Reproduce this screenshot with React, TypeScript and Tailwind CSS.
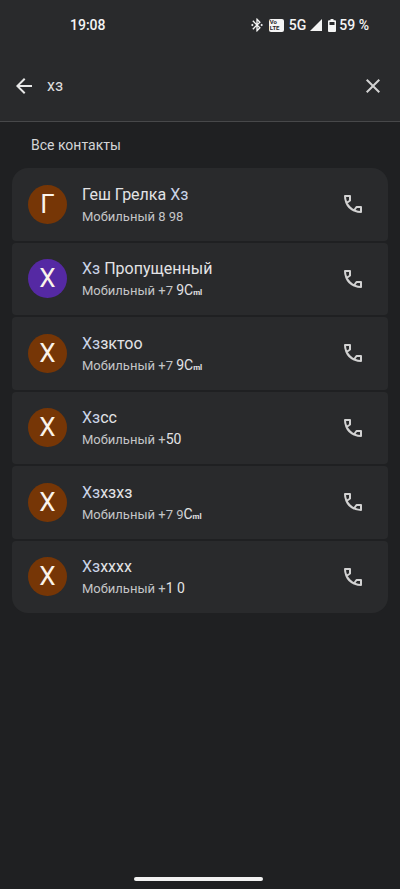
import { MdArrowBack, MdBluetoothConnected, MdClose } from "react-icons/md";

interface Contact {
  initial: string;
  color: string;
  before?: string;
  match: string;
  after?: string;
  phone: string;
  tail?: string;
  small?: string;
}

const contacts: Contact[] = [
  { initial: "Г", color: "bg-[#763606]", before: "Геш Грелка ", match: "Хз", phone: "8 98" },
  { initial: "Х", color: "bg-[#5529a3]", match: "Хз", after: " Пропущенный", phone: "+7 ", tail: "9C", small: "ml" },
  { initial: "Х", color: "bg-[#763606]", match: "Хз", after: "зктоо", phone: "+7 ", tail: "9C", small: "ml" },
  { initial: "Х", color: "bg-[#763606]", match: "Хз", after: "сс", phone: "+", tail: "50" },
  { initial: "Х", color: "bg-[#763606]", match: "Хз", after: "хзхз", phone: "+7 9", tail: "C", small: "ml" },
  { initial: "Х", color: "bg-[#763606]", match: "Хз", after: "хххх", phone: "+", tail: "1 0" },
];

const PhoneIcon = () => (
  <svg viewBox="0 0 24 24" className="size-6" fill="none" stroke="currentColor" strokeWidth="2" strokeLinejoin="round">
    <path d="M4 4h5v4.500L5.500 11C7 14.500 9.500 17 13 18.500l2.500-3.500H20v5C11.200 20 4 12.800 4 4z" />
  </svg>
);

const StatusBar = () => (
  <div className="flex h-[50px] items-center justify-between pl-[70px] pr-[31px] text-sm font-medium text-[#f4f4f4]">
    <span>19:08</span>
    <div className="flex items-center">
      <MdBluetoothConnected className="mr-1 size-4" stroke="currentColor" />
      <div className="mr-[5px] flex h-[13px] w-[15px] flex-col justify-center rounded-xs bg-[#f4f4f4] pl-px text-[6px] leading-[6px] font-bold text-[#292a2c]">
        <span>Vo</span>
        <span>LTE</span>
      </div>
      <span className="mr-1">5G</span>
      <svg viewBox="0 0 12 12" className="mr-1.5 size-3" fill="currentColor">
        <path d="M12 0v12H0z" />
      </svg>
      <svg viewBox="0 0 8 13" className="mr-[3px] h-[13px] w-2" fill="currentColor" fillRule="evenodd">
        <path d="M2.500 0h3v1.300H7a1 1 0 0 1 1 1V12a1 1 0 0 1-1 1H1a1 1 0 0 1-1-1V2.300a1 1 0 0 1 1-1h1.500zM1.500 3v3h5V3z" />
      </svg>
      <span>59 %</span>
    </div>
  </div>
);

const SearchBar = () => (
  <div className="flex h-[71px] items-center px-3">
    <button type="button" aria-label="Назад" className="text-[#e8e8e8]">
      <MdArrowBack className="size-6" />
    </button>
    <input
      type="text"
      defaultValue="хз"
      aria-label="Поиск контактов"
      className="ml-[11px] min-w-0 flex-1 bg-transparent text-base text-[#dcdcdc] outline-none"
    />
    <button type="button" aria-label="Очистить" className="mr-[3px] text-[#d2d2d2]">
      <MdClose className="size-6" />
    </button>
  </div>
);

const ContactRow = ({ contact }: { contact: Contact }) => (
  <li className="flex items-center rounded-sm bg-[#292a2c] pl-4 pr-[23px] first:rounded-t-2xl last:rounded-b-2xl">
    <div className={`flex size-[39px] shrink-0 items-center justify-center rounded-full text-[26px] text-[#fbf3ea] ${contact.color}`}>
      {contact.initial}
    </div>
    <div className="ml-[15px] min-w-0 flex-1 pt-0.5">
      <p className="text-base leading-6 text-[#e3e3e5]">
        {contact.before}
        <span className="text-[#c9d3e6]">{contact.match}</span>
        {contact.after}
      </p>
      <p className="text-[13px] leading-[18px] text-[#c4c5c7]">
        Мобильный {contact.phone}
        <span className="text-sm leading-[18px] text-[#e3e3e5]">{contact.tail}</span>
        <span className="text-[8px] font-bold text-[#e3e3e5]">{contact.small}</span>
      </p>
    </div>
    <button type="button" aria-label="Позвонить" className="text-[#d2d2d2]">
      <PhoneIcon />
    </button>
  </li>
);

export default function App() {
  return (
    <div className="flex min-h-screen flex-col bg-[#1f2022] font-['Roboto','Noto_Sans',sans-serif]">
      <header className="border-b border-[#47484a] bg-[#292a2c]">
        <StatusBar />
        <SearchBar />
      </header>
      <main className="flex-1 px-3">
        <h2 className="py-[13px] pl-[19px] text-sm leading-5 text-[#d4d5d7]">Все контакты</h2>
        <ul className="grid min-h-[445px] auto-rows-fr gap-0.5">
          {contacts.map((contact, index) => (
            <ContactRow key={index} contact={contact} />
          ))}
        </ul>
      </main>
      <div className="flex justify-center pr-1 pb-2">
        <div className="h-1 w-[129px] rounded-full bg-[#f2f2f2]" />
      </div>
    </div>
  );
}
